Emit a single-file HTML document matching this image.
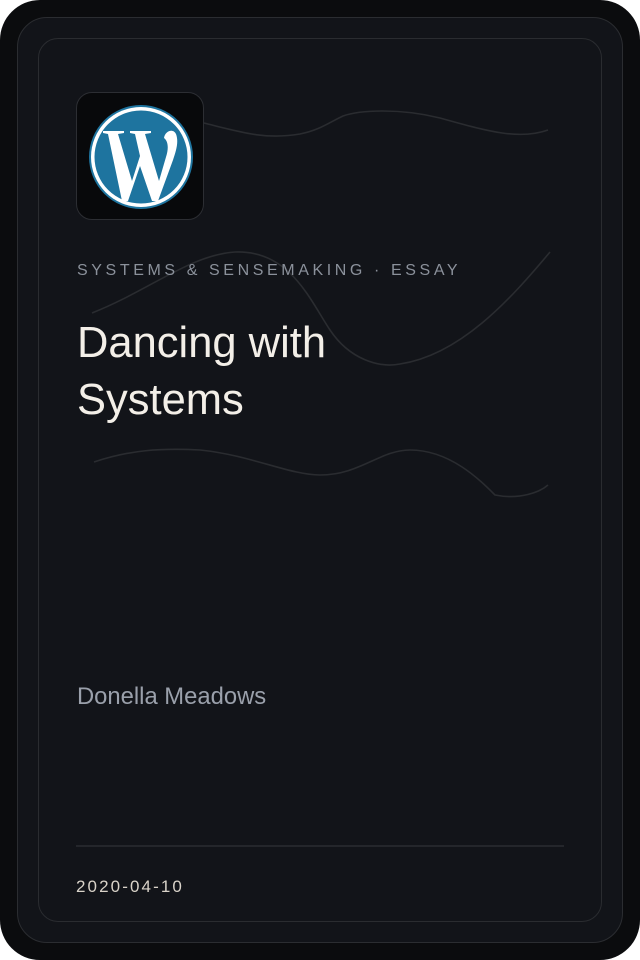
<!DOCTYPE html>
<html><head><meta charset="utf-8"><style>
html,body{margin:0;padding:0;background:#fff;}
body{width:640px;height:960px;position:relative;overflow:hidden;font-family:"Liberation Sans",Arial,sans-serif;}
.outer{position:absolute;left:0;top:0;width:640px;height:960px;background:#0b0c0e;border-radius:40px;}
.f1{position:absolute;left:17px;top:17px;width:604px;height:924px;border:1px solid #2b2d31;border-radius:30px;background:#121419;}
.f2{position:absolute;left:38px;top:38px;width:562px;height:882px;border:1px solid #2a2c30;border-radius:20px;}
.icon{position:absolute;left:76px;top:92px;width:126px;height:126px;background:#08090b;border:1px solid #2c2e33;border-radius:16px;}
.cat{position:absolute;left:77px;top:262px;font-size:16px;letter-spacing:3.6px;color:#8b919b;white-space:nowrap;}
.title{position:absolute;left:77px;top:315px;font-size:43.5px;line-height:57px;color:#f3efe8;}
.author{position:absolute;left:77px;top:683px;font-size:23.8px;color:#9aa0ab;}
.hr{position:absolute;left:76px;top:845px;width:488px;height:2px;background:#24262b;}
.date{position:absolute;left:76px;top:877px;font-size:17px;letter-spacing:2.1px;color:#d9d3c9;}
</style></head><body>
<div class="outer"></div>
<div class="f1"></div>
<div class="f2"></div>
<svg style="position:absolute;left:0;top:0" width="640" height="960" fill="none" stroke="#2a2c30" stroke-width="1.6">
<path d="M204 123 C240 132 265 140 300 134 C320 130 330 122 343 116 C360 110 400 108 440 118 C490 132 520 140 548 130"/>
<path d="M92 313 C150 290 190 255 235 252 C290 250 310 300 330 330 C350 360 380 368 400 364 C460 355 510 300 550 252"/>
<path d="M94 462 C130 450 160 448 200 450 C250 455 290 475 320 475 C360 475 380 450 410 450 C450 450 480 480 495 495 C520 500 540 492 548 485"/>
</svg>
<div class="icon">
<svg width="126" height="126" viewBox="0 0 126 126" style="position:absolute;left:0;top:0">
<circle cx="64" cy="64" r="52" fill="#1e749f"/>
<circle cx="64" cy="64" r="50" fill="#ffffff"/>
<circle cx="64" cy="64" r="46.5" fill="#1e749f"/>
<path d="M26 38 L47 38 L47 40 L41 41 L55 88 L63 63 L58 41 L53 40 L53 38 L74 38 L74 40 L68 41 L82 88 L89 64 C92 55 91 48 87 45 C88 38 96 35 99 41 C102 49 99 58 96 67 L81 108 L75 108 L63 73 L51 108 L45 108 L31 41 L26 40 Z" fill="#ffffff"/>
</svg>
</div>
<div class="cat">SYSTEMS &amp; SENSEMAKING · ESSAY</div>
<div class="title">Dancing with<br>Systems</div>
<div class="author">Donella Meadows</div>
<div class="hr"></div>
<div class="date">2020-04-10</div>
</body></html>
